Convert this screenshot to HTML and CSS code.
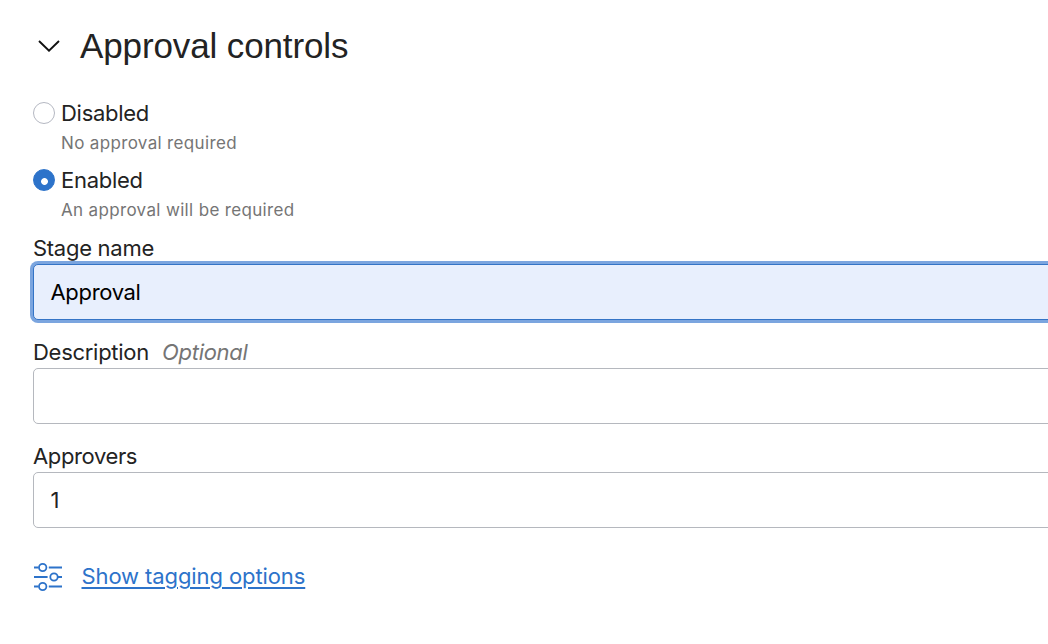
FILE: index.html
```html
<!DOCTYPE html>
<html lang="en">
<head>
<meta charset="utf-8">
<title>Approval controls</title>
<link rel="stylesheet" href="styles.css">
</head>
<body>
<main class="panel">
  <header class="panel-header">
    <svg class="chevron" viewBox="0 0 22 12" aria-hidden="true"><path d="M1 1 11 10.7 21 1"/></svg>
    <h1 class="title">Approval controls</h1>
  </header>
  <div class="options">
    <label class="option">
      <input class="radio" type="radio" name="approval">
      <span class="option-name">Disabled</span>
      <span class="hint">No approval required</span>
    </label>
    <label class="option">
      <input class="radio" type="radio" name="approval" checked>
      <span class="option-name">Enabled</span>
      <span class="hint">An approval will be required</span>
    </label>
  </div>
  <div class="field">
    <label class="label"><span>Stage name</span></label>
    <div class="box focused">Approval</div>
  </div>
  <div class="field">
    <label class="label"><span>Description</span><em class="optional">Optional</em></label>
    <div class="box"></div>
  </div>
  <div class="field">
    <label class="label"><span class="approvers-label">Approvers</span></label>
    <div class="box">1</div>
  </div>
  <div class="tagging">
    <svg class="sliders" viewBox="0 0 30 30" aria-hidden="true">
      <path d="M1 5.5H5.5M15.8 5.5H29M1 15H14.6M25 15H29M1 24.5H5.5M15.8 24.5H29"/>
      <circle cx="9.7" cy="5.5" r="3.7"/><circle cx="21" cy="15" r="3.7"/><circle cx="9.7" cy="24.5" r="3.7"/>
    </svg>
    <a class="link" href="#">Show tagging options</a>
  </div>
</main>
</body>
</html>
```
FILE: styles.css
```css
* { box-sizing: border-box; }
body {
  margin: 0;
  background: #fff;
  color: #232323;
  font-family: Inter, "Liberation Sans", sans-serif;
  font-size: 22px;
  letter-spacing: -0.28px;
  overflow: hidden;
}
.panel { width: 1100px; padding: 21px 0 0 33px; }
.panel-header { display: flex; align-items: center; height: 49px; padding-left: 5px; }
.chevron { width: 22px; height: 12px; margin-right: 20px; fill: none; stroke: #111; stroke-width: 1.9; }
.title {
  margin: 0;
  font: 400 35px/48px "Liberation Sans", sans-serif;
  letter-spacing: -0.12px;
}
.options { display: grid; gap: 7px; padding-top: 28px; }
.option {
  display: grid;
  grid-template-columns: 22px 1fr;
  grid-template-rows: 30px 30px;
  column-gap: 6px;
  align-items: center;
}
.radio {
  appearance: none;
  width: 22px;
  height: 22px;
  margin: 0;
  border: 1px solid #b5b8c2;
  border-radius: 50%;
  background: #fff;
}
.radio:checked {
  border-color: #2d73ca;
  background: radial-gradient(circle at 10.5px 11.5px, #fff 3px, #2d73ca 3.8px);
}
.hint { grid-column: 2; font-size: 17px; letter-spacing: 0.34px; color: #757575; }
.label { display: flex; align-items: center; height: 28px; line-height: 28px; }
.field { height: 104px; }
.options + .field { margin-top: 9px; }
.approvers-label { letter-spacing: -0.38px; }
.box {
  display: flex;
  align-items: center;
  height: 56px;
  margin-top: 2px;
  padding-left: 16.5px;
  border: 1px solid #b5b8be;
  border-radius: 5px;
}
.focused {
  border-color: #3474c6;
  background: #e8effd;
  color: #000;
  letter-spacing: -0.33px;
  box-shadow: 0 0 0 3px #7ba5df;
}
.optional { margin-left: 13px; color: #757575; }
.tagging { display: flex; align-items: center; height: 40px; margin-top: 10px; }
.sliders { width: 30px; height: 30px; margin: 2px 18.5px 0 0; fill: none; stroke: #2d73ca; stroke-width: 1.8; }
.link { color: #2d73ca; letter-spacing: -0.1px; text-decoration-thickness: 2px; text-underline-offset: 3px; }
```
